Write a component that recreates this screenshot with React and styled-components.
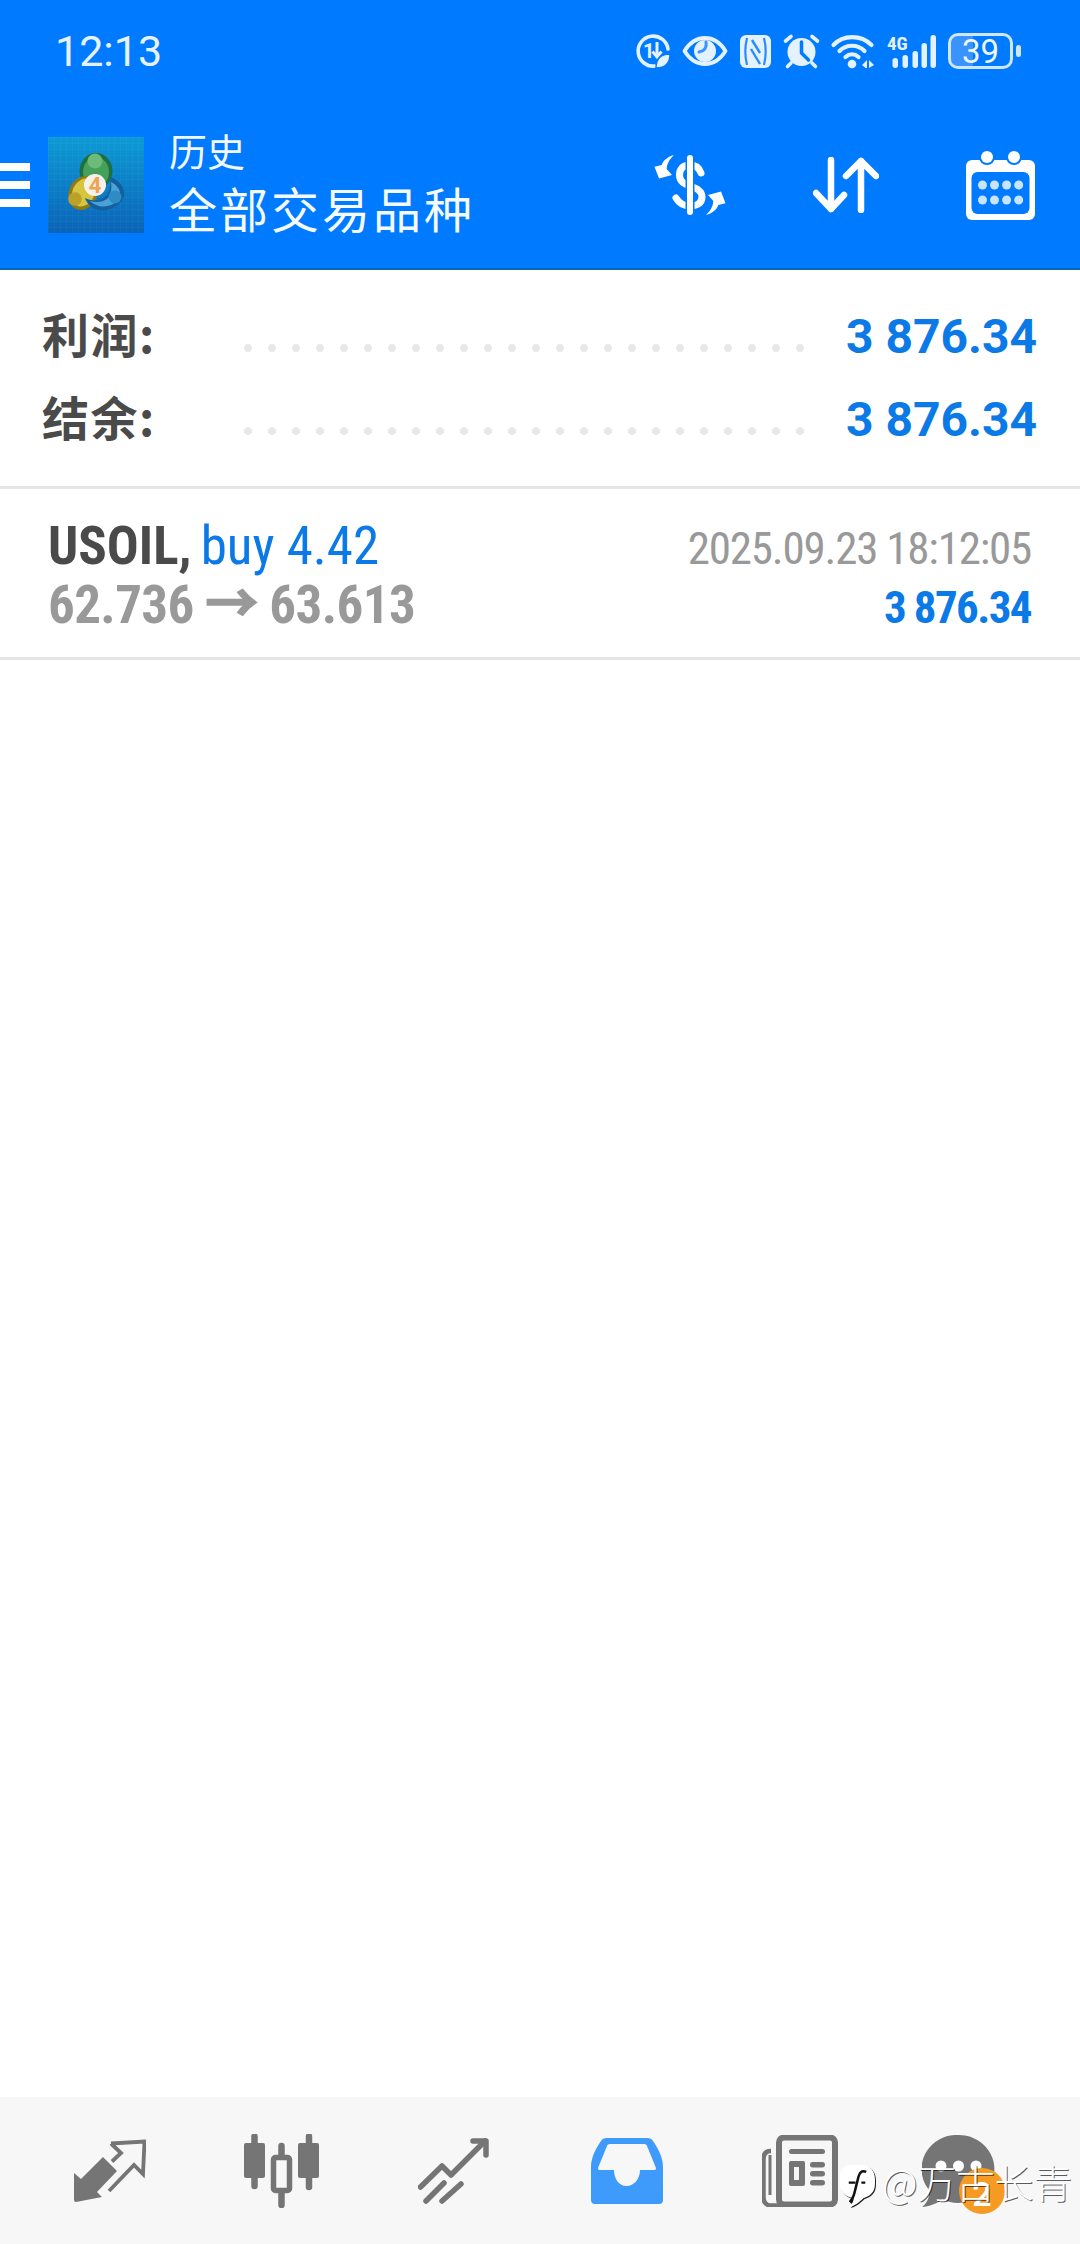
import React from "react";
import styled, { createGlobalStyle } from "styled-components";

const Global = createGlobalStyle`
  html, body { margin: 0; padding: 0; background: #fff; }
  * { box-sizing: border-box; }
  #root { width: 1080px; }
`;
const Page = styled.div`
  position: relative; width: 1080px; height: 2244px; display: flex; flex-direction: column;
  overflow: hidden; font-family: Roboto, "Noto Sans CJK SC", sans-serif; background: #fff;
`;
const Header = styled.header`
  background: #007aff; border-bottom: 2px solid #0b67b8; height: 270px; display: flex; flex-direction: column;
`;
const StatusBar = styled.div`
  height: 102px; display: flex; align-items: center; padding: 0 67px 0 55px;
`;
const Time = styled.span`
  font-size: 43px; font-weight: 400; color: #e6f3ff; margin-right: auto;
`;
const StatusIcons = styled.div`
  display: flex; align-items: center; gap: 12px; color: #e4f1ff;
  svg { display: block; overflow: visible; }
`;
const Battery = styled.div`
  position: relative; width: 65px; height: 36px; margin-left: -1px; border: 3.5px solid #cfe6ff; border-radius: 10px;
  display: flex; align-items: center; justify-content: center;
  font-size: 33px; color: #eef7ff; line-height: 1;
  background: linear-gradient(90deg, #3a93ff 0 38%, transparent 38%);
  background-clip: padding-box;
  &::after {
    content: ""; position: absolute; right: -11px; top: 9px; width: 5px; height: 12px;
    border-radius: 3px; background: #cfe6ff;
  }
`;
const Toolbar = styled.div`
  flex: 1; display: flex; align-items: center; padding-right: 45px; color: #fff;
`;
const Burger = styled.div`
  width: 30px; display: flex; flex-direction: column; gap: 10px; margin-right: 18px;
  i { display: block; height: 8px; background: #fff; }
`;
const Title = styled.div`
  margin: -4px auto 0 25px; display: flex; flex-direction: column; font-family: "Noto Sans CJK SC", sans-serif;
`;
const Sub = styled.div`
  font-size: 38px; line-height: 44px; margin-bottom: 4px; color: #f2f8ff;
`;
const Main = styled.div`
  font-size: 48px; line-height: 62px; letter-spacing: 3px; color: #f4faff;
`;
const ToolIcons = styled.div`
  display: flex; align-items: center; svg { display: block; }
`;
const ToolIcon = styled.span`
  display: block; margin-left: ${(p) => p.$gap}px;
`;
const Summary = styled.section`
  padding: 24px 44px 25px 42px; display: flex; flex-direction: column; border-bottom: 3px solid #e5e5e5; height: 219px;
`;
const SumRow = styled.div`
  height: 83px; display: flex; align-items: center;
`;
const SumLabel = styled.span`
  width: 194px; margin-top: -7px; font-family: "Noto Sans CJK SC", sans-serif; font-size: 47px; letter-spacing: 1.5px; font-weight: 700; color: #4a4a4a;
`;
const Dots = styled.span`
  width: 576px; height: 8px; margin-top: 24px;
  background: radial-gradient(circle at center, #e8e8e8 3.6px, transparent 4.2px) left center / 24px 8px repeat-x;
`;
const SumValue = styled.span`
  margin: 2px -1px 0 auto; font-size: 48px; font-weight: 700; color: #0b7ae6; white-space: nowrap;
`;
const Trade = styled.section`
  height: 171px; border-bottom: 3px solid #e5e5e5; display: flex; justify-content: space-between; padding: 0 49px 0 48px;
`;
const TradeCol = styled.div`
  padding-top: ${(p) => p.$top}px; text-align: ${(p) => p.$align}; font-stretch: 75%; white-space: nowrap;
`;
const Line = styled.div`
  height: 59px; line-height: 59px; font-size: ${(p) => p.$size}px; font-weight: ${(p) => p.$weight || 400};
  color: ${(p) => p.$color}; letter-spacing: ${(p) => p.$track || 0}px;
`;
const Sym = styled.span`
  font-weight: 700; color: #4a4a4a;
`;
const Buy = styled.span`
  color: #0b7ae6; margin-left: -3px;
`;
const Arrow = styled.span`
  -webkit-text-stroke: 1.6px #999;
`;
const Spacer = styled.div`
  flex: 1;
`;
const Nav = styled.nav`
  height: 147px; background: #f7f7f7; padding-left: 24px;
  display: grid; grid-template-columns: 172px 170px 174px 174px 172px 144px; align-items: center;
`;
const NavItem = styled.div`
  position: relative; display: flex; justify-content: center; align-items: center; color: #757575;
  svg { display: block; }
`;
const Badge = styled.span`
  position: absolute; left: 73px; top: 33px; width: 46px; height: 46px; border-radius: 50%; padding-top: 7px;
  background: #f59a23; color: #fff; font-size: 34px; font-weight: 500; display: flex; align-items: center; justify-content: center;
`;
const Watermark = styled.div`
  position: absolute; left: 840px; top: 2157px; display: flex; align-items: flex-start; gap: 7px;
`;
const WmLogoBox = styled.span`
  display: block; margin-top: 8px; filter: drop-shadow(1px 1px 0 #222);
  svg { display: block; }
`;
const WmText = styled.span`
  font-family: "Noto Sans CJK SC", sans-serif; font-size: 39px; line-height: 48px; font-weight: 300; color: #fff;
  text-shadow: 1px 1px 0 rgba(0,0,0,.65); white-space: nowrap; letter-spacing: -0.3px;
`;

const CircleData = () => (
  <svg width="34" height="34" viewBox="0 0 34 34" fill="none">
    <path d="M19 32A15 15 0 1 1 32 15" stroke="currentColor" strokeWidth="3.6" strokeLinecap="round" />
    <text x="7" y="24" fontSize="20" fontWeight="700" fill="currentColor" fontFamily="Roboto">1</text>
    <path d="M21 8V22M16.500 17.500l4.500 5.500 4.500-5.500" stroke="currentColor" strokeWidth="3" fill="none" />
    <path d="M20 34c0-9 5-14 14-14 0 9-5 14-14 14Z" fill="currentColor" stroke="#007aff" strokeWidth="1.400" />
  </svg>
);
const Eye = () => (
  <svg width="46" height="30" viewBox="0 0 46 30" fill="none">
    <path d="M2.500 15C8 6 15 2 23 2s15 4 20.500 13C38 24 31 28 23 28S8 24 2.500 15Z" stroke="currentColor" strokeWidth="3.800" strokeLinejoin="round" />
    <circle cx="23" cy="15" r="11" fill="currentColor" />
    <path d="M24 6c1 5-1 9-7 10" stroke="#3a93ff" strokeWidth="3" strokeLinecap="round" />
  </svg>
);
const Nfc = () => (
  <svg width="31" height="33" viewBox="0 0 31 33" fill="none">
    <rect width="31" height="33" rx="6" fill="currentColor" />
    <path d="M7 3C5 11 5 22 7 30M24 3C26 11 26 22 24 30" stroke="#2a8aff" strokeWidth="2.200" />
    <path d="M12 5l8 13M11 14l9 15" stroke="#2a8aff" strokeWidth="2.400" />
  </svg>
);
const Alarm = () => (
  <svg width="36" height="34" viewBox="0 0 36 34" fill="none">
    <circle cx="18.500" cy="18" r="14" fill="currentColor" />
    <path d="M18.500 8v11l7 7" stroke="#007aff" strokeWidth="3.500" strokeLinecap="round" strokeLinejoin="round" />
    <path d="M2.500 7 8 2.500M34.500 7 29 2.500M8 29l-3.500 3.500M29 29l3.500 3.500" stroke="currentColor" strokeWidth="3.600" strokeLinecap="round" />
  </svg>
);
const Wifi = () => (
  <svg width="43" height="34" viewBox="0 0 43 34" fill="none">
    <path d="M2.500 11C12 .5 30 .5 40.500 11" stroke="currentColor" strokeWidth="4.200" strokeLinecap="round" />
    <path d="M8.500 17c7-7 18-7 25 0" stroke="currentColor" strokeWidth="4.200" strokeLinecap="round" />
    <path d="M14.500 23c4-3.500 9-3.500 13 0" stroke="currentColor" strokeWidth="4.200" strokeLinecap="round" />
    <circle cx="21" cy="30" r="4.300" fill="currentColor" />
    <path d="M31 31l5-5v8h-1.500ZM38 26l5 5-5 3Z" fill="currentColor" />
  </svg>
);
const Signal = () => (
  <svg width="51" height="34" viewBox="0 0 51 34">
    <text x="1" y="16" fontSize="19" fontWeight="700" fill="currentColor" fontFamily="Roboto" style={{ fontStretch: "75%" }}>4G</text>
    <g fill="currentColor">
      <rect x="6.500" y="24" width="5.500" height="10" rx="2.700" />
      <rect x="16.500" y="21" width="5.500" height="13" rx="2.700" />
      <rect x="26.500" y="17" width="5.500" height="17" rx="2.700" />
      <rect x="35.500" y="9" width="5.500" height="25" rx="2.700" />
      <rect x="44.500" y="1" width="5.500" height="33" rx="2.700" />
    </g>
  </svg>
);
const Mt4Logo = () => (
  <svg width="96" height="96" viewBox="0 0 96 96" style={{ display: "block" }}>
    <defs>
      <linearGradient id="mtBg" x1="0" y1="0" x2="0" y2="1">
        <stop offset="0" stopColor="#0d9ad6" />
        <stop offset="1" stopColor="#0a63b7" />
      </linearGradient>
      <pattern id="mtGrid" width="6" height="6" patternUnits="userSpaceOnUse">
        <path d="M6 0H0V6" fill="none" stroke="#ffffff" strokeOpacity=".06" />
      </pattern>
    </defs>
    <rect width="96" height="96" fill="url(#mtBg)" />
    <rect width="96" height="96" fill="url(#mtGrid)" />
    <ellipse cx="48" cy="34" rx="16.500" ry="18" fill="#1f6f42" />
    <ellipse cx="48" cy="35" rx="13" ry="15" fill="#45a05b" />
    <circle cx="47" cy="24" r="7.500" fill="#6cbb78" />
    <ellipse cx="35" cy="56" rx="14" ry="17.500" transform="rotate(25 35 56)" fill="#8f7a16" />
    <ellipse cx="35.500" cy="55.500" rx="11" ry="14.500" transform="rotate(25 35.500 55.500)" fill="#d8c53f" />
    <circle cx="27" cy="62" r="6.800" fill="#b9a12a" />
    <path d="M62 40C71 43 77 50 76 59 73 69 60 75 50 73 44 71 39 67 37 61c8 4 16 3 22-3 3-5 4-11 3-18Z" fill="#14609f" />
    <path d="M63 45c6 3 10 8 9 14-3 8-13 12-21 10-5-2-7-3-9-5 7 2 15 1 19-4 2-4 3-9 2-15Z" fill="#4aa3d8" />
    <circle cx="67" cy="60" r="6.500" fill="#2e8cc4" />
    <circle cx="47" cy="48" r="11" fill="#f6f2ea" />
    <text x="47" y="56" textAnchor="middle" fontSize="22" fontWeight="700" fill="#eda550" fontFamily="Roboto">4</text>
  </svg>
);
const ARROW = "M20 0C13 2 9 6 7.700 10L.5 11.700 5 23.500 18 20 12.700 14C13 8 16 4 20 0Z";
const Dollar = () => (
  <svg width="72" height="60" viewBox="0 0 72 60" fill="none">
    <path d="M47 18C45 12 41 10 36 10 29 10 25.500 14 25.500 20 25.500 27 31 29 36 31 43 33 48 37 48 42 48 49 42 51 36 51 30 51 25 48 22 43" stroke="#fff" strokeWidth="7" strokeLinecap="round" />
    <path d="M36 0V60" stroke="#007aff" strokeWidth="9" />
    <path d="M36 3V57" stroke="#fff" strokeWidth="6" strokeLinecap="round" />
    <path d={ARROW} fill="#fff" />
    <path d={ARROW} fill="#fff" transform="rotate(180 36 30)" />
  </svg>
);
const Sort = () => (
  <svg width="66" height="56" viewBox="0 0 66 56" fill="none" stroke="#fff" strokeWidth="6.500" strokeLinecap="round" strokeLinejoin="round">
    <path d="M18 3V52M3 36 18 52 31 38" />
    <path d="M48 53V4M33 19 48 4 63 19" />
  </svg>
);
const Calendar = () => (
  <svg width="69" height="69" viewBox="0 0 69 69">
    <rect y="9" width="69" height="60" rx="6" fill="#fff" />
    <rect x="5.500" y="21" width="58" height="42" rx="6" fill="#007aff" />
    <circle cx="21" cy="6" r="8" fill="#007aff" />
    <circle cx="48" cy="6" r="8" fill="#007aff" />
    <circle cx="21" cy="6" r="6" fill="#fff" />
    <circle cx="48" cy="6" r="6" fill="#fff" />
    {[34, 49].map((y) => [16.5, 28.5, 40.6, 52.7].map((x) => <circle key={`${x}-${y}`} cx={x} cy={y} r="4.500" fill="#c9e4ff" />))}
  </svg>
);
const TradeIcon = () => (
  <svg width="72" height="64" viewBox="0 0 72 64" fill="none">
    <path d="M0 34l7 6L29 18l14 14-20 21 5 5-26 5q-2 0-2-2Z" fill="currentColor" />
    <path d="M37 4.500 70.500 2.500 69 35l-9-9-25 26M37 4.500l10 9.500-9 8.500" stroke="currentColor" strokeWidth="3.800" strokeLinejoin="miter" />
  </svg>
);
const CandleIcon = () => (
  <svg width="75" height="74" viewBox="0 0 75 74" fill="none">
    <path d="M10.500 2.500V52M37.500 12V71M65 2.500V53" stroke="currentColor" strokeWidth="6.500" strokeLinecap="round" />
    <rect y="9" width="21" height="35" rx="2" fill="currentColor" />
    <rect x="29.500" y="23.500" width="16" height="33" rx="2" fill="#f7f7f7" stroke="currentColor" strokeWidth="5.500" />
    <rect x="54" y="9" width="21" height="35" rx="2" fill="currentColor" />
  </svg>
);
const ChartIcon = () => (
  <svg width="71" height="66" viewBox="0 0 71 66" fill="none" stroke="currentColor" strokeWidth="5.500" strokeLinecap="round" strokeLinejoin="round">
    <path d="M2.500 49 24 28 33 37 67 3" />
    <path d="M55 3H68V17" />
    <path d="M8 63 26 45M24 63 43 46" />
  </svg>
);
const InboxIcon = () => (
  <svg width="72" height="66" viewBox="0 0 72 66">
    <path d="M16 0H56c3 0 5 1 6 3 6 9 10 17 10 26V62a4 4 0 0 1-4 4H4a4 4 0 0 1-4-4V29C0 20 4 12 10 3c1-2 3-3 6-3Z" fill="#3f9bfb" />
    <path d="M19 6H53c2 0 3 1 3 2l9 22c0 2-1 2-2 2H49c0 9-6 16-13.500 16S23 41 23 32H9c-1 0-2 0-2-2l9-22c0-1 1-2 3-2Z" fill="#f7f7f7" />
  </svg>
);
const NewsIcon = () => (
  <svg width="76" height="72" viewBox="0 0 76 72" fill="none">
    <path d="M9 16C3 16 1.500 20 1.500 24V63c0 4 3 7.500 7 7.500H20" stroke="currentColor" strokeWidth="4.500" />
    <path d="M8 20V60" stroke="currentColor" strokeWidth="3" />
    <rect x="17" y="2.500" width="56" height="67" rx="5" stroke="currentColor" strokeWidth="6" fill="#f7f7f7" />
    <rect x="27" y="14" width="36" height="5" rx="2.500" fill="currentColor" />
    <rect x="27" y="26" width="16" height="25" rx="2" fill="currentColor" />
    <rect x="32" y="32" width="5" height="13" fill="#f7f7f7" />
    <rect x="48" y="27" width="15" height="5.500" rx="2.700" fill="currentColor" />
    <rect x="48" y="36" width="15" height="5.500" rx="2.700" fill="currentColor" />
    <rect x="48" y="45" width="15" height="5.500" rx="2.700" fill="currentColor" />
  </svg>
);
const ChatIcon = () => (
  <svg width="73" height="72" viewBox="0 0 73 72">
    <path d="M36.500 0a36 34 0 1 1-16 64.500C15 68 7 72 0 72c5-4 8-10 7-17A35 34 0 0 1 36.500 0Z" fill="currentColor" />
    <circle cx="19" cy="31" r="5.500" fill="#fff" />
    <circle cx="36.500" cy="31" r="5.500" fill="#fff" />
    <circle cx="54" cy="31" r="5.500" fill="#fff" />
  </svg>
);
const WmLogo = () => (
  <WmLogoBox>
    <svg width="35" height="42" viewBox="0 0 36 43">
      <path d="M11 0H22C31 0 36 6 36 15V19C36 28 31 32 24 34 20 38 15 42 10 43 13 40 14 37 14 34 5 33 0 27 0 19V12C0 5 4 0 11 0Z" fill="#fff" />
      <path d="M27 7C22 5 20 8 19 12L15 28C14 32 13 35 10 38" fill="none" stroke="#111" strokeWidth="2.600" />
      <path d="M9 18H16M22 18H26" fill="none" stroke="#111" strokeWidth="2.200" />
    </svg>
  </WmLogoBox>
);

export default function App() {
  return (
    <Page>
      <Global />
      <Header>
        <StatusBar>
          <Time>12:13</Time>
          <StatusIcons>
            <CircleData />
            <Eye />
            <Nfc />
            <Alarm />
            <Wifi />
            <Signal />
            <Battery>39</Battery>
          </StatusIcons>
        </StatusBar>
        <Toolbar>
          <Burger><i /><i /><i /></Burger>
          <Mt4Logo />
          <Title>
            <Sub>历史</Sub>
            <Main>全部交易品种</Main>
          </Title>
          <ToolIcons>
            <ToolIcon $gap={0}><Dollar /></ToolIcon>
            <ToolIcon $gap={87}><Sort /></ToolIcon>
            <ToolIcon $gap={87}><Calendar /></ToolIcon>
          </ToolIcons>
        </Toolbar>
      </Header>
      <Summary>
        <SumRow><SumLabel>利润:</SumLabel><Dots /><SumValue>3 876.34</SumValue></SumRow>
        <SumRow><SumLabel>结余:</SumLabel><Dots /><SumValue>3 876.34</SumValue></SumRow>
      </Summary>
      <Trade>
        <TradeCol $top={28} $align="left">
          <Line $size={53}><Sym>USOIL,</Sym> <Buy>buy 4.42</Buy></Line>
          <Line $size={53} $weight={700} $color="#999" $track={-0.6}>62.736 <Arrow>→</Arrow> 63.613</Line>
        </TradeCol>
        <TradeCol $top={30} $align="right">
          <Line $size={45} $color="#999" $track={-1.2}>2025.09.23 18:12:05</Line>
          <Line $size={45} $weight={700} $color="#0b7ae6" $track={-1.6}>3 876.34</Line>
        </TradeCol>
      </Trade>
      <Spacer />
      <Nav>
        <NavItem><TradeIcon /></NavItem>
        <NavItem><CandleIcon /></NavItem>
        <NavItem><ChartIcon /></NavItem>
        <NavItem><InboxIcon /></NavItem>
        <NavItem><NewsIcon /></NavItem>
        <NavItem><ChatIcon /><Badge>2</Badge></NavItem>
      </Nav>
      <Watermark>
        <WmLogo />
        <WmText>@万古长青</WmText>
      </Watermark>
    </Page>
  );
}
